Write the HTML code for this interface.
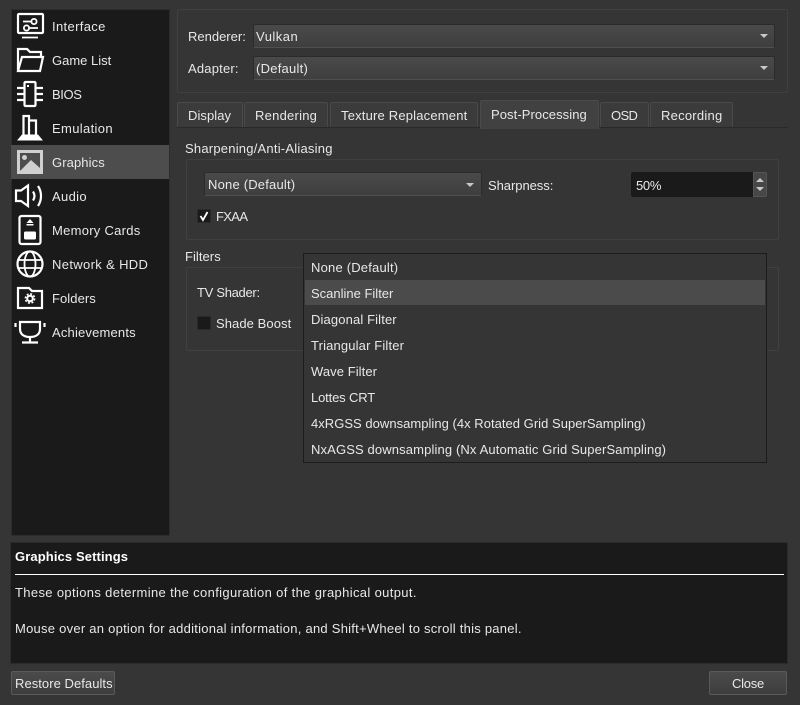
<!DOCTYPE html>
<html><head><meta charset="utf-8"><style>
html,body{margin:0;padding:0;background:#353535}
body{width:800px;height:705px;position:relative;overflow:hidden;font:13px/18px "Liberation Sans","Noto Sans CJK JP",sans-serif;color:#e8e8e8}
div{position:absolute;box-sizing:border-box}
svg{position:absolute;left:0;top:0}
.t{white-space:nowrap;height:18px;letter-spacing:.35px}
.box{border:1px solid #404040;border-radius:2px}
.combo{background:linear-gradient(#4a4a4a,#3e3e3e);border:1px solid #2b2b2b;border-bottom-color:#505050;border-radius:2px}
.arr{width:0;height:0;border-left:4px solid transparent;border-right:4px solid transparent;border-top:4px solid #c8c8c8}
.tab{top:102px;height:25px;background:#3b3b3b;border:1px solid #4a4a4a;border-bottom:0;border-radius:2px 2px 0 0}
.btn{background:linear-gradient(#4b4b4b,#3d3d3d);border:1px solid #5a5a5a;border-radius:2px}
.cb{width:14px;height:14px;background:#1a1a1a;border:1px solid #2a2a2a}
</style></head><body>
<div style="left:11px;top:9px;width:159px;height:527px;background:#1a1a1a;border:1px solid #2c2c2c"></div>
<div style="left:11px;top:145px;width:158px;height:34px;background:#4d4d4d"></div>
<svg width="800" height="705" fill="none" stroke="#fff" stroke-width="2.2">
<rect x="18" y="14" width="25" height="19" rx="1"/><path d="M22 37.500H38M23 21.500H31M29 28H38" stroke-width="1.800"/><circle cx="34" cy="21.500" r="2.600" stroke-width="1.800"/><circle cx="26.500" cy="28" r="2.600" stroke-width="1.800"/>
<path d="M18 71V49H27L30 52H41V57M18 71H40L43 57H22L18 71Z"/>
<rect x="24.500" y="82" width="11" height="24" rx="1"/><path d="M17 88H24M17 94H24M17 100H24M36 88H43M36 94H43M36 100H43"/><rect x="27" y="85" width="2" height="2" fill="#fff" stroke="none"/>
<path d="M23.500 136V116H29V136M29 120.500H36V136"/><path d="M17 140.500L22 134.500H38L43 140.500Z" fill="#fff" stroke="none"/>
<rect x="17" y="150" width="26" height="24" fill="#d0d0d0" stroke="none"/><rect x="20" y="153" width="20" height="18" fill="#4d4d4d" stroke="none"/><circle cx="24.500" cy="157.500" r="2.500" fill="#d0d0d0" stroke="none"/><path d="M20 171L31 160L40 168V171Z" fill="#d0d0d0" stroke="none"/>
<path d="M16 190.500H21L28 185.500V206L21 201H16Z"/><path d="M33 191.500C35 194.500 35 197.500 33 200.500M38 186C42 192 42 200 38 206"/>
<rect x="19.500" y="216" width="21" height="28" rx="2"/><path d="M30 219L33.500 223H26.500Z" fill="#fff" stroke="none"/><rect x="26.500" y="224" width="7" height="1.500" fill="#fff" stroke="none"/><rect x="24" y="231.500" width="12" height="8" rx="1.500" fill="#fff" stroke="none"/>
<circle cx="30" cy="264" r="12.500"/><ellipse cx="30" cy="264" rx="5.500" ry="12.500" stroke-width="1.800"/><path d="M18 260H42M18 268H42" stroke-width="1.800"/>
<path d="M18 308V288H29L32 291H42V308Z"/><circle cx="30" cy="298.500" r="2.800" stroke-width="2"/><circle cx="30" cy="298.500" r="4.600" stroke-width="1.600" stroke-dasharray="2 1.610"/>
<path d="M20 322H40V329C40 335 35 337 30 337C25 337 20 335 20 329Z"/><path d="M30 337V342M22 342.500H38M15.500 323V327M44.500 323V327"/>
</svg>
<div class="t" style="left:52px;top:18px">Interface</div>
<div class="t" style="left:52px;top:52px;letter-spacing:0">Game List</div>
<div class="t" style="left:52px;top:86px;letter-spacing:-.4px">BIOS</div>
<div class="t" style="left:52px;top:120px">Emulation</div>
<div class="t" style="left:52px;top:154px;letter-spacing:.1px">Graphics</div>
<div class="t" style="left:52px;top:188px">Audio</div>
<div class="t" style="left:52px;top:222px;letter-spacing:.27px">Memory Cards</div>
<div class="t" style="left:52px;top:256px">Network &amp; HDD</div>
<div class="t" style="left:52px;top:290px;letter-spacing:.07px">Folders</div>
<div class="t" style="left:52px;top:324px;letter-spacing:.18px">Achievements</div>

<div class="box" style="left:177px;top:9px;width:611px;height:84px"></div>
<div class="t" style="left:188px;top:28px;letter-spacing:0">Renderer:</div>
<div class="t" style="left:188px;top:60px;letter-spacing:.2px">Adapter:</div>
<div class="combo" style="left:253px;top:24px;width:522px;height:24px"></div><div class="arr" style="left:760px;top:34px"></div>
<div class="t" style="left:256px;top:28px;letter-spacing:.5px">Vulkan</div>
<div class="combo" style="left:253px;top:56px;width:522px;height:24px"></div><div class="arr" style="left:760px;top:66px"></div>
<div class="t" style="left:256px;top:60px;letter-spacing:.25px">(Default)</div>

<div style="left:177px;top:127px;width:611px;height:1px;background:#232a32"></div>
<div class="tab" style="left:177px;width:66px"></div><div class="t" style="left:188px;top:107px;letter-spacing:.07px">Display</div>
<div class="tab" style="left:244px;width:84px"></div><div class="t" style="left:255px;top:107px;letter-spacing:.24px">Rendering</div>
<div class="tab" style="left:330px;width:148px"></div><div class="t" style="left:341px;top:107px;letter-spacing:.19px">Texture Replacement</div>
<div class="tab" style="left:480px;top:100px;width:119px;height:29px;background:#414141"></div><div class="t" style="left:491px;top:106px;letter-spacing:.08px">Post-Processing</div>
<div class="tab" style="left:600px;width:49px"></div><div class="t" style="left:611px;top:107px;letter-spacing:-.65px">OSD</div>
<div class="tab" style="left:650px;width:83px"></div><div class="t" style="left:661px;top:107px;letter-spacing:.24px">Recording</div>

<div class="t" style="left:185px;top:140px;letter-spacing:.22px">Sharpening/Anti-Aliasing</div>
<div class="box" style="left:186px;top:159px;width:593px;height:81px"></div>
<div class="combo" style="left:204px;top:172px;width:278px;height:24px"></div><div class="arr" style="left:466px;top:183px"></div>
<div class="t" style="left:208px;top:176px;letter-spacing:.2px">None (Default)</div>
<div class="t" style="left:488px;top:177px;letter-spacing:-.05px">Sharpness:</div>
<div style="left:631px;top:172px;width:122px;height:25px;background:#1a1a1a;border-radius:2px 0 0 2px"></div>
<div class="t" style="left:636px;top:177px;letter-spacing:-.3px">50%</div>
<div style="left:753px;top:172px;width:14px;height:25px;background:#474747;border:1px solid #555;border-radius:0 2px 2px 0"></div>
<div style="left:756px;top:178px;width:0;height:0;border-left:4px solid transparent;border-right:4px solid transparent;border-bottom:4px solid #c8c8c8"></div>
<div style="left:756px;top:187px;width:0;height:0;border-left:4px solid transparent;border-right:4px solid transparent;border-top:4px solid #c8c8c8"></div>
<div class="cb" style="left:197px;top:209px"></div>
<svg width="800" height="705" fill="none" stroke="#fff" stroke-width="1.800"><path d="M200.500 216L203 220L207.500 212"/></svg>
<div class="t" style="left:216px;top:208px;letter-spacing:-.65px">FXAA</div>

<div class="t" style="left:185px;top:248px;letter-spacing:.05px">Filters</div>
<div class="box" style="left:186px;top:267px;width:593px;height:84px"></div>
<div class="t" style="left:197px;top:284px;letter-spacing:-.3px">TV Shader:</div>
<div class="cb" style="left:197px;top:316px"></div>
<div class="t" style="left:216px;top:315px;letter-spacing:.08px">Shade Boost</div>

<div style="left:303px;top:253px;width:464px;height:210px;background:#353535;border:1px solid #1c1c1c"></div>
<div style="left:305px;top:280px;width:460px;height:25px;background:#4b4b4b"></div>
<div class="t" style="left:311px;top:259px;letter-spacing:.2px">None (Default)</div>
<div class="t" style="left:311px;top:285px;letter-spacing:0">Scanline Filter</div>
<div class="t" style="left:311px;top:311px;letter-spacing:.13px">Diagonal Filter</div>
<div class="t" style="left:311px;top:337px;letter-spacing:.15px">Triangular Filter</div>
<div class="t" style="left:311px;top:363px;letter-spacing:.07px">Wave Filter</div>
<div class="t" style="left:311px;top:389px;letter-spacing:-.15px">Lottes CRT</div>
<div class="t" style="left:311px;top:415px;letter-spacing:.03px">4xRGSS downsampling (4x Rotated Grid SuperSampling)</div>
<div class="t" style="left:311px;top:441px;letter-spacing:.13px">NxAGSS downsampling (Nx Automatic Grid SuperSampling)</div>

<div style="left:10px;top:542px;width:778px;height:122px;background:#1a1a1a;border:1px solid #2c2c2c"></div>
<div class="t" style="left:15px;top:548px;font-weight:bold;color:#fff;letter-spacing:.11px">Graphics Settings</div>
<div style="left:15px;top:574px;width:769px;height:1px;background:#fff"></div>
<div class="t" style="left:15px;top:584px">These options determine the configuration of the graphical output.</div>
<div class="t" style="left:15px;top:620px;letter-spacing:.25px">Mouse over an option for additional information, and Shift+Wheel to scroll this panel.</div>

<div class="btn" style="left:11px;top:671px;width:104px;height:24px"></div><div class="t" style="left:15px;top:675px;letter-spacing:.05px">Restore Defaults</div>
<div class="btn" style="left:709px;top:671px;width:78px;height:24px"></div><div class="t" style="left:732px;top:675px;letter-spacing:-.25px">Close</div>
</body></html>
